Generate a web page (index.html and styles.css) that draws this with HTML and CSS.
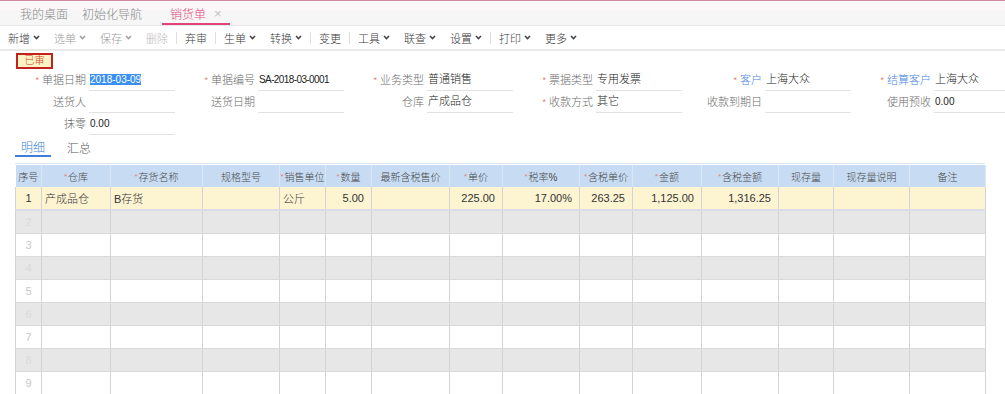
FILE: index.html
```html
<!DOCTYPE html>
<html lang="zh-CN">
<head>
<meta charset="utf-8">
<title>销货单</title>
<link rel="stylesheet" href="styles.css">
</head>
<body>
<div class="page">
  <div class="tabbar">
    <div class="tab">我的桌面</div>
    <div class="tab">初始化导航</div>
    <div class="tab tab-active">销货单<span class="tab-close">×</span></div>
  </div>

  <div class="toolbar">
    <div class="tb">新增<svg class="chev" viewBox="0 0 7 5"><path d="M1 1 L3.5 3.6 L6 1"/></svg></div>
    <div class="tb tb-off">选单<svg class="chev" viewBox="0 0 7 5"><path d="M1 1 L3.5 3.6 L6 1"/></svg></div>
    <div class="tb tb-off">保存<svg class="chev" viewBox="0 0 7 5"><path d="M1 1 L3.5 3.6 L6 1"/></svg></div>
    <div class="tb tb-dis">删除</div>
    <span class="tb-sep"></span>
    <div class="tb">弃审</div>
    <span class="tb-sep"></span>
    <div class="tb">生单<svg class="chev" viewBox="0 0 7 5"><path d="M1 1 L3.5 3.6 L6 1"/></svg></div>
    <div class="tb">转换<svg class="chev" viewBox="0 0 7 5"><path d="M1 1 L3.5 3.6 L6 1"/></svg></div>
    <span class="tb-sep"></span>
    <div class="tb">变更</div>
    <span class="tb-sep"></span>
    <div class="tb">工具<svg class="chev" viewBox="0 0 7 5"><path d="M1 1 L3.5 3.6 L6 1"/></svg></div>
    <div class="tb">联查<svg class="chev" viewBox="0 0 7 5"><path d="M1 1 L3.5 3.6 L6 1"/></svg></div>
    <div class="tb">设置<svg class="chev" viewBox="0 0 7 5"><path d="M1 1 L3.5 3.6 L6 1"/></svg></div>
    <span class="tb-sep"></span>
    <div class="tb">打印<svg class="chev" viewBox="0 0 7 5"><path d="M1 1 L3.5 3.6 L6 1"/></svg></div>
    <div class="tb">更多<svg class="chev" viewBox="0 0 7 5"><path d="M1 1 L3.5 3.6 L6 1"/></svg></div>
  </div>

  <div class="status-row"><span class="badge">已审</span></div>

  <div class="form">
    <div class="field"><span class="lbl"><i class="req">*</i>单据日期</span><span class="val val-num"><span class="sel">2018-03-09</span></span></div>
    <div class="field"><span class="lbl"><i class="req">*</i>单据编号</span><span class="val val-num val-code">SA-2018-03-0001</span></div>
    <div class="field"><span class="lbl"><i class="req">*</i>业务类型</span><span class="val">普通销售</span></div>
    <div class="field"><span class="lbl"><i class="req">*</i>票据类型</span><span class="val">专用发票</span></div>
    <div class="field"><span class="lbl lbl-link"><i class="req">*</i>客户</span><span class="val">上海大众</span></div>
    <div class="field"><span class="lbl lbl-link"><i class="req">*</i>结算客户</span><span class="val">上海大众</span></div>

    <div class="field"><span class="lbl">送货人</span><span class="val"></span></div>
    <div class="field"><span class="lbl">送货日期</span><span class="val"></span></div>
    <div class="field"><span class="lbl">仓库</span><span class="val">产成品仓</span></div>
    <div class="field"><span class="lbl"><i class="req">*</i>收款方式</span><span class="val">其它</span></div>
    <div class="field"><span class="lbl">收款到期日</span><span class="val"></span></div>
    <div class="field"><span class="lbl">使用预收</span><span class="val val-num">0.00</span></div>

    <div class="field"><span class="lbl">抹零</span><span class="val val-num">0.00</span></div>
  </div>

  <div class="subtabs">
    <div class="subtab subtab-active">明细</div>
    <div class="subtab">汇总</div>
  </div>

  <div class="grid-wrap">
    <table class="grid">
      <colgroup>
        <col style="width:26px"><col style="width:69px"><col style="width:92px"><col style="width:77px">
        <col style="width:46px"><col style="width:46px"><col style="width:78px"><col style="width:53px">
        <col style="width:77px"><col style="width:53px"><col style="width:69px"><col style="width:77px">
        <col style="width:55px"><col style="width:76px"><col style="width:76px">
      </colgroup>
      <thead>
        <tr>
          <th>序号</th>
          <th><i class="req">*</i>仓库</th>
          <th><i class="req">*</i>存货名称</th>
          <th>规格型号</th>
          <th><i class="req">*</i>销售单位</th>
          <th><i class="req">*</i>数量</th>
          <th>最新含税售价</th>
          <th><i class="req">*</i>单价</th>
          <th><i class="req">*</i>税率%</th>
          <th><i class="req">*</i>含税单价</th>
          <th><i class="req">*</i>金额</th>
          <th><i class="req">*</i>含税金额</th>
          <th>现存量</th>
          <th>现存量说明</th>
          <th>备注</th>
        </tr>
      </thead>
      <tbody>
        <tr class="row-sel">
          <td class="no no-first">1</td><td>产成品仓</td><td>B存货</td><td></td><td>公斤</td>
          <td class="r">5.00</td><td></td><td class="r">225.00</td><td class="r">17.00%</td><td class="r">263.25</td>
          <td class="r">1,125.00</td><td class="r">1,316.25</td><td></td><td></td><td></td>
        </tr>
        <tr class="row-alt"><td class="no">2</td><td></td><td></td><td></td><td></td><td></td><td></td><td></td><td></td><td></td><td></td><td></td><td></td><td></td><td></td></tr>
        <tr><td class="no">3</td><td></td><td></td><td></td><td></td><td></td><td></td><td></td><td></td><td></td><td></td><td></td><td></td><td></td><td></td></tr>
        <tr class="row-alt"><td class="no">4</td><td></td><td></td><td></td><td></td><td></td><td></td><td></td><td></td><td></td><td></td><td></td><td></td><td></td><td></td></tr>
        <tr><td class="no">5</td><td></td><td></td><td></td><td></td><td></td><td></td><td></td><td></td><td></td><td></td><td></td><td></td><td></td><td></td></tr>
        <tr class="row-alt"><td class="no">6</td><td></td><td></td><td></td><td></td><td></td><td></td><td></td><td></td><td></td><td></td><td></td><td></td><td></td><td></td></tr>
        <tr><td class="no">7</td><td></td><td></td><td></td><td></td><td></td><td></td><td></td><td></td><td></td><td></td><td></td><td></td><td></td><td></td></tr>
        <tr class="row-alt"><td class="no">8</td><td></td><td></td><td></td><td></td><td></td><td></td><td></td><td></td><td></td><td></td><td></td><td></td><td></td><td></td></tr>
        <tr><td class="no">9</td><td></td><td></td><td></td><td></td><td></td><td></td><td></td><td></td><td></td><td></td><td></td><td></td><td></td><td></td></tr>
      </tbody>
    </table>
  </div>
</div>
</body>
</html>
```

FILE: styles.css
```css
html, body {
  margin: 0;
  padding: 0;
  background: #ffffff;
}
body {
  width: 1005px;
  height: 394px;
  overflow: hidden;
  font-family: "Liberation Sans", "Noto Sans CJK SC", sans-serif;
  font-size: 11px;
  font-weight: 300;
  color: #333;
}
.page {
  width: 1005px;
}

/* top tab bar */
.tabbar {
  display: flex;
  height: 24px;
  border-top: 1px solid #cf8aa3;
  border-bottom: 1px solid #e6e6e6;
  background: linear-gradient(#fdf7f9 0%, #fbf6f8 40%, #f6f6f6 45%, #f6f6f6 100%);
  padding-left: 13px;
}
.tab {
  display: flex;
  align-items: center;
  padding: 0 7px;
  font-size: 12px;
  color: #8a8a8a;
  box-sizing: border-box;
  height: 24px;
}
.tab-active {
  margin-left: 13px;
  padding: 2px 8px 0 8px;
  color: #e2437a;
  border-bottom: 2px solid #e2437a;
}
.tab-close {
  margin-left: 8px;
  color: #c4c4c4;
  font-size: 13px;
}

/* toolbar */
.toolbar {
  display: flex;
  align-items: center;
  height: 23px;
  padding-left: 1px;
  border-bottom: 2px solid #e9e9e9;
  background: #fff;
}
.tb {
  display: flex;
  align-items: center;
  padding: 0 7px;
  color: #3a3a3a;
  white-space: nowrap;
}
.tb-off {
  color: #9a9a9a;
}
.tb-dis {
  color: #bcbcbc;
}
.chev {
  width: 7px;
  height: 5px;
  margin-left: 3px;
  fill: none;
  stroke: #444;
  stroke-width: 1.5;
}
.tb-off .chev {
  stroke: #a0a0a0;
}
.tb-sep {
  width: 1px;
  height: 12px;
  margin: 0 1px;
  background: #dedede;
}

/* status */
.status-row {
  height: 16px;
  padding: 2px 0 0 16px;
}
.badge {
  display: inline-flex;
  align-items: center;
  justify-content: center;
  width: 33px;
  height: 12px;
  border: 2px solid #c3211f;
  background: #fdf3c4;
  color: #d33a2a;
  font-size: 10px;
  line-height: 12px;
}

/* form */
.form {
  display: grid;
  grid-template-columns: repeat(6, 169px);
  grid-auto-rows: 22px;
  overflow: hidden;
  width: 1005px;
}
.field {
  display: flex;
  align-items: flex-end;
  height: 22px;
}
.lbl {
  flex: none;
  width: 89px;
  padding-right: 3px;
  box-sizing: border-box;
  text-align: right;
  color: #6a6a6a;
  line-height: 21px;
  white-space: nowrap;
}
.lbl-link {
  color: #4a86e0;
}
.req {
  font-style: normal;
  color: #e48080;
  font-size: 9px;
  margin-right: 3px;
  vertical-align: 1px;
}
.val {
  flex: none;
  width: 85px;
  height: 21px;
  line-height: 21px;
  border-bottom: 1px solid #e2e2e2;
  color: #222;
  white-space: nowrap;
  overflow: hidden;
  padding-left: 1px;
}
.val-num {
  font-size: 10px;
}
.val-code {
  letter-spacing: -0.6px;
}
.sel {
  background: #3b8ff0;
  color: #fff;
  letter-spacing: 0;
}

/* sub tabs */
.subtabs {
  display: flex;
  margin-top: 2px;
  padding-left: 15px;
  height: 20px;
}
.subtab {
  display: flex;
  align-items: center;
  padding: 0 6px;
  font-size: 12px;
  color: #555;
  box-sizing: border-box;
  height: 20px;
  margin-left: 10px;
}
.subtab-active {
  margin-left: 0;
  color: #3d7fd8;
  border-bottom: 2px solid #3d7fd8;
}

/* grid */
.grid-wrap {
  margin: 6px 20px 0 15px;
  border-top: 1px solid #d8e6f4;
  padding-top: 1px;
}
.grid {
  border-collapse: collapse;
  table-layout: fixed;
  width: 970px;
}
.grid th {
  height: 22px;
  padding: 0;
  background: #c7dcf3;
  color: #4a4a4a;
  font-weight: 300;
  font-size: 10px;
  text-align: center;
  border-right: 1px solid #dbe7f5;
  white-space: nowrap;
  overflow: hidden;
}
.grid th .req {
  margin-right: 1px;
  font-size: 8px;
  vertical-align: 2px;
}
.grid td {
  height: 22px;
  padding: 0 3px;
  border-right: 1px solid #d3d3d3;
  border-bottom: 1px solid #dadada;
  white-space: nowrap;
  overflow: hidden;
  color: #333;
}
.grid td:first-child {
  border-left: 1px solid #d3d3d3;
}
.grid td.r {
  text-align: right;
  padding-right: 7px;
}
.grid td.no {
  text-align: center;
  padding: 0;
  color: #c8c8c8;
}
.grid td.no-first {
  color: #333;
}
.row-sel td {
  background: #fdf4d2;
  border-bottom: 2px solid #dcdce8;
}
.row-alt td {
  background: #e7e7e7;
}
.row-alt td.no {
  color: #dadada;
}
.grid-wrap::after {
  content: none;
}
```
